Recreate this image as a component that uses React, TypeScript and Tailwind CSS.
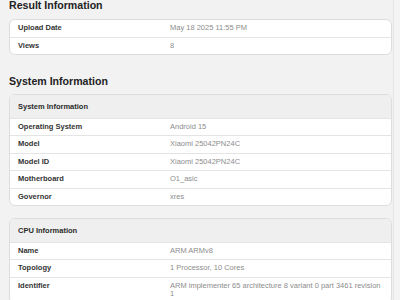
const font = { fontFamily: '"Liberation Sans", Arial, sans-serif' };

type Row = { label: string; value: string };

const resultRows: Row[] = [
  { label: "Upload Date", value: "May 18 2025 11:55 PM" },
  { label: "Views", value: "8" },
];

const systemRows: Row[] = [
  { label: "Operating System", value: "Android 15" },
  { label: "Model", value: "Xiaomi 25042PN24C" },
  { label: "Model ID", value: "Xiaomi 25042PN24C" },
  { label: "Motherboard", value: "O1_asic" },
  { label: "Governor", value: "xres" },
];

const cpuRows: Row[] = [
  { label: "Name", value: "ARM ARMv8" },
  { label: "Topology", value: "1 Processor, 10 Cores" },
  {
    label: "Identifier",
    value: "ARM implementer 65 architecture 8 variant 0 part 3461 revision 1",
  },
];

function InfoRow({ row, first }: { row: Row; first?: boolean }) {
  return (
    <div
      className={`flex min-h-[16.5px] items-start py-[4px] pl-[8px] ${first ? "" : "border-t border-[#e4e4e4]"}`}
    >
      <div className="w-[152px] shrink-0 text-[7.5px] font-semibold leading-[8.5px] text-[#333]">
        {row.label}
      </div>
      <div className="w-[212px] text-[7.5px] leading-[8.5px] text-[#8d8d8d]">
        {row.value}
      </div>
    </div>
  );
}

function Card({ title, rows }: { title?: string; rows: Row[] }) {
  return (
    <div className="overflow-hidden rounded-[6px] border border-[#dddddd] bg-white">
      {title && (
        <div className="flex h-[22.5px] items-center bg-[#efefef] pl-[8px] text-[7.5px] font-bold text-[#2a2a2a]">
          {title}
        </div>
      )}
      {rows.map((row, i) => (
        <InfoRow key={row.label} row={row} first={!title && i === 0} />
      ))}
    </div>
  );
}

export default function App() {
  return (
    <div className="flex h-[300px] w-[400px] overflow-hidden bg-[#f2f2f2]" style={font}>
      <div className="w-[393px] shrink-0 pl-[9px] pr-[1px]">
        <h1 className="-mt-[4px] h-[18px] text-[10.6px] font-bold leading-[18px] text-[#222]">
          Result Information
        </h1>
        <div className="mt-[5px]">
          <Card rows={resultRows} />
        </div>

        <h2 className="mt-[17px] h-[18px] text-[10.6px] font-bold leading-[18px] text-[#222]">
          System Information
        </h2>
        <div className="mt-[4px]">
          <Card title="System Information" rows={systemRows} />
        </div>

        <div className="mt-[12px]">
          <Card title="CPU Information" rows={cpuRows} />
        </div>
      </div>

      {/* scrollbar strip */}
      <div className="flex-1 border-l border-[#e6e6e6] bg-[#f4f4f4]" />
    </div>
  );
}
